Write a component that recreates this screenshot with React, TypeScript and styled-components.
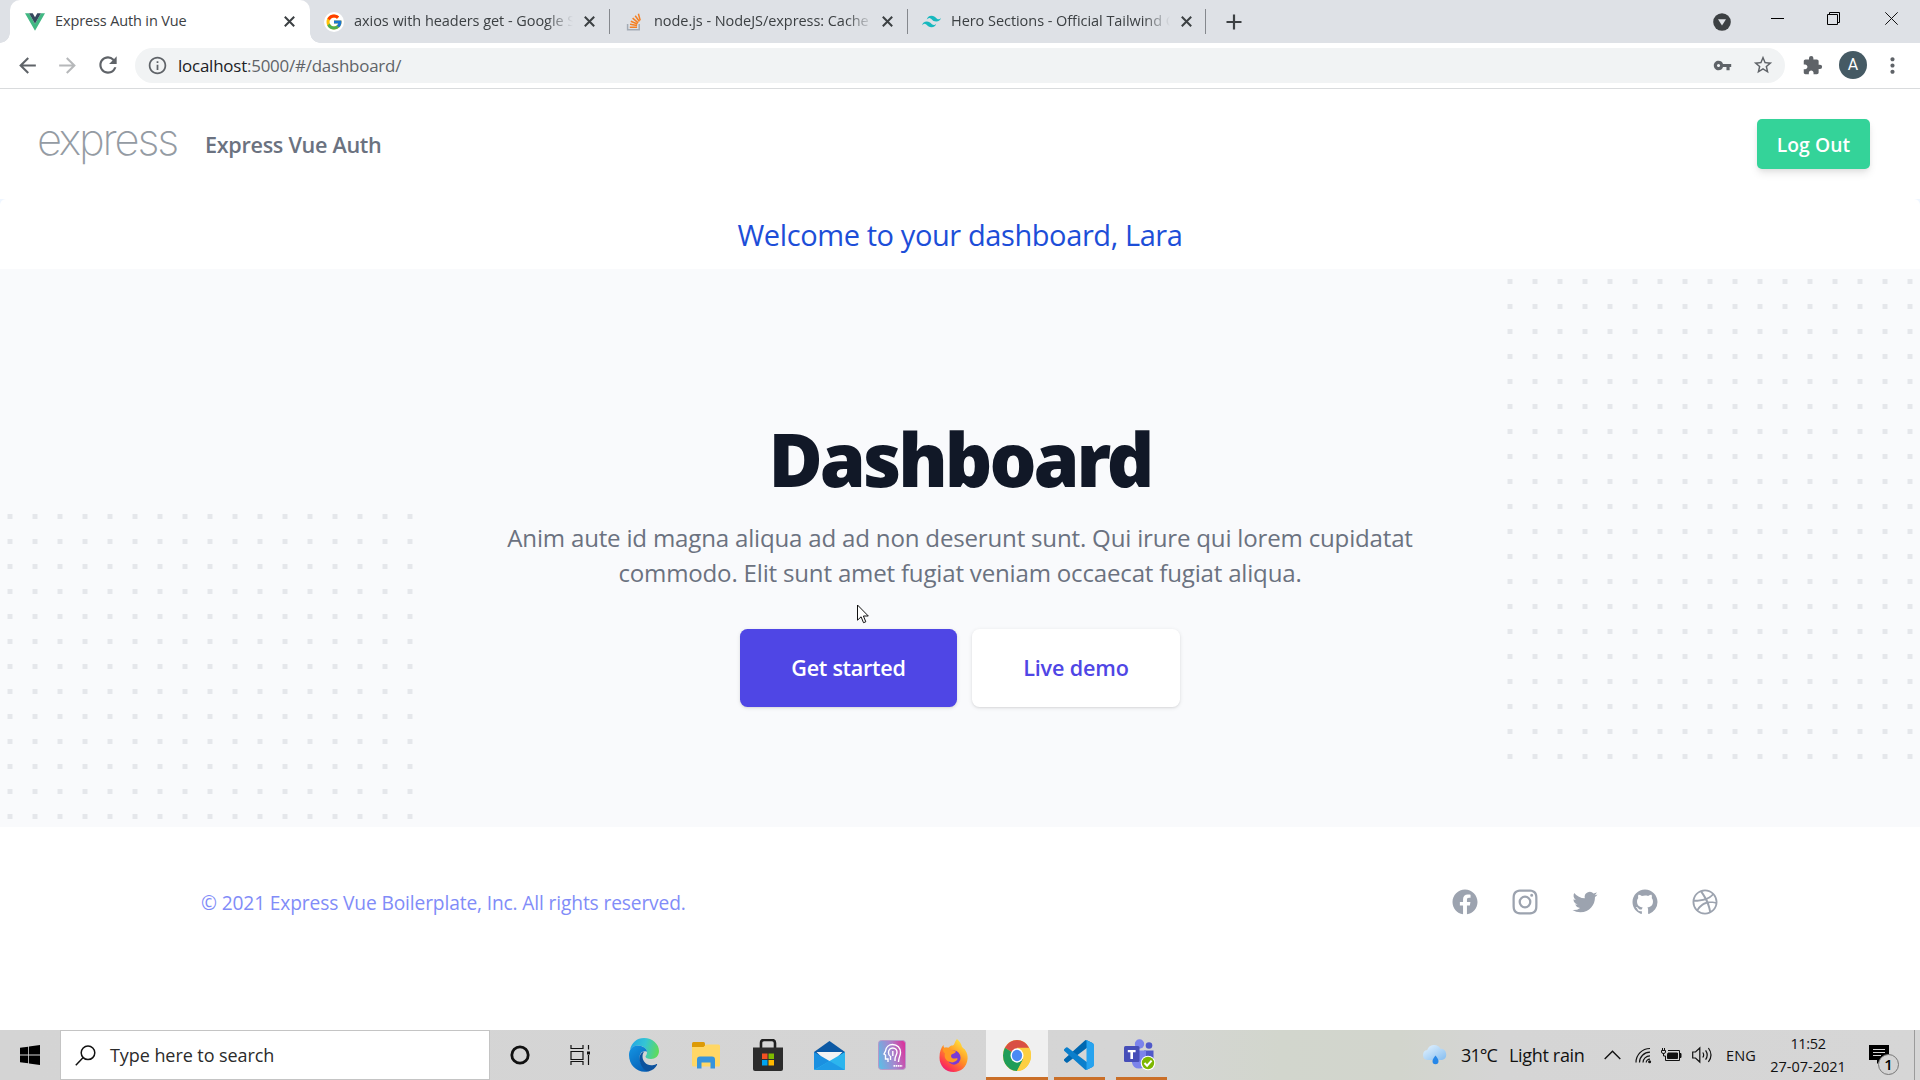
import React from "react";
import styled, { createGlobalStyle } from "styled-components";
import { FcGoogle } from "react-icons/fc";
import {
  MdArrowBack,
  MdArrowForward,
  MdExtension,
  MdInfoOutline,
  MdMoreVert,
  MdRefresh,
  MdStarBorder,
  MdVpnKey,
} from "react-icons/md";

const GlobalStyle = createGlobalStyle`
  * { box-sizing: border-box; }
  body {
    margin: 0;
    background: #fff;
    font-family: "Open Sans", "Noto Sans", sans-serif;
    overflow: hidden;
  }
  svg { display: block; flex: none; }
  h1, p { margin: 0; }
`;

const Screen = styled.div`
  width: 1920px;
  height: 1080px;
  display: flex;
  flex-direction: column;
  overflow: hidden;
`;

/* ---------- Browser chrome ---------- */

const TabStrip = styled.div`
  height: 43px;
  flex: none;
  display: flex;
  align-items: stretch;
  padding-left: 10px;
  background: #dee1e6;
`;

const Tab = styled.div<{ $active?: boolean; $width: number; $pad?: number }>`
  position: relative;
  width: ${(p) => p.$width}px;
  display: flex;
  align-items: center;
  padding: 0 ${(p) => p.$pad ?? 15}px;
  background: ${(p) => (p.$active ? "#fff" : "transparent")};
  border-radius: 10px 10px 0 0;

  &::before,
  &::after {
    content: "";
    display: ${(p) => (p.$active ? "block" : "none")};
    position: absolute;
    bottom: 0;
    width: 10px;
    height: 10px;
  }
  &::before {
    left: -10px;
    background: radial-gradient(circle at 0 0, transparent 9.5px, #fff 10px);
  }
  &::after {
    right: -10px;
    background: radial-gradient(circle at 100% 0, transparent 9.5px, #fff 10px);
  }
`;

const Favicon = styled.span`
  width: 20px;
  height: 20px;
  margin-right: 10px;
  display: flex;
  align-items: center;
  justify-content: center;
  flex: none;
`;

const GoogleDisc = styled(Favicon)`
  background: #fff;
  border-radius: 50%;
`;

const TabTitle = styled.span<{ $fade?: boolean; $track?: number }>`
  flex: 1;
  white-space: nowrap;
  padding-bottom: 2px;
  font-size: 14.5px;
  letter-spacing: ${(p) => p.$track ?? -0.05}px;
  color: #3c4043;
  ${(p) => p.$fade && "mask-image: linear-gradient(90deg, #000 192px, transparent 219px);"}
`;

const Divider = styled.span`
  width: 1px;
  height: 25px;
  margin-top: 9px;
  background: #85888d;
`;

const NewTab = styled.span`
  margin-left: 20px;
  display: flex;
  align-items: center;
`;

const WindowControls = styled.div`
  margin-left: auto;
  display: flex;
  align-items: flex-start;
  padding: 12px 22px 0 0;
`;

const ControlSlot = styled.span<{ $gap: number; $drop?: number }>`
  margin-left: ${(p) => p.$gap}px;
  margin-top: ${(p) => p.$drop ?? 0}px;
`;

const Toolbar = styled.div`
  height: 46px;
  flex: none;
  display: flex;
  align-items: center;
  padding: 0 0 1px 15px;
  background: #fff;
  border-bottom: 1px solid #d9dbdd;
  color: #5f6368;
`;

const NavIcon = styled.span<{ $dim?: boolean }>`
  width: 40px;
  flex: none;
  display: flex;
  opacity: ${(p) => (p.$dim ? 0.45 : 1)};
`;

const AddressBar = styled.div`
  height: 35px;
  width: 1650px;
  flex: none;
  display: flex;
  align-items: center;
  padding: 0 11px 0 12px;
  border-radius: 18px;
  background: #f1f3f4;
`;

const Url = styled.span`
  flex: 1;
  padding-left: 10px;
  font-size: 16.9px;
  letter-spacing: -0.2px;
  color: #5f6368;
`;

const UrlHost = styled.span`
  color: #202124;
`;

const AddressActions = styled.span`
  display: flex;
  align-items: center;
  gap: 20px;
`;

const ToolbarActions = styled.div`
  display: flex;
  align-items: center;
  padding-left: 17px;
`;

const Avatar = styled.span`
  width: 28px;
  height: 28px;
  margin: 0 13px 0 16px;
  border-radius: 50%;
  background: #455a64;
  color: #fff;
  font: 400 16px/28px Roboto, sans-serif;
  text-align: center;
`;

/* ---------- Page ---------- */

const Page = styled.main`
  height: 941px;
  flex: none;
  background: #eff6ff;
  display: flex;
  flex-direction: column;
`;

const NavBar = styled.header`
  height: 110px;
  flex: none;
  display: flex;
  align-items: center;
  padding: 0 50px 0 37px;
  background: #fff;
`;

const Logo = styled.span`
  width: 168px;
  font-family: Inter, Roboto, sans-serif;
  font-weight: 200;
  font-size: 43.5px;
  line-height: 50px;
  letter-spacing: -2.2px;
  color: #949ba3;
  margin-top: -10px;
`;

const Brand = styled.span`
  font-size: 21.6px;
  font-weight: 600;
  letter-spacing: -0.3px;
  color: #6b7280;
`;

const LogOut = styled.button`
  width: 113px;
  height: 50px;
  margin-left: auto;
  padding: 0;
  border: 0;
  border-radius: 5px;
  background: #34d399;
  color: #fff;
  font: 600 19.3px "Open Sans", sans-serif;
  letter-spacing: 0.1px;
  box-shadow: 0 5px 8px -1px rgba(0, 0, 0, 0.1), 0 2px 5px -1px rgba(0, 0, 0, 0.06);
`;

const Welcome = styled.div`
  height: 70px;
  flex: none;
  border-radius: 6px 6px 0 0;
  background: #fff;
  text-align: center;
  font-size: 29px;
  line-height: 72px;
  letter-spacing: -0.4px;
  color: #1d4ed8;
`;

const Hero = styled.section`
  position: relative;
  height: 558px;
  flex: none;
  display: flex;
  flex-direction: column;
  align-items: center;
  padding-top: 152px;
  background: #f9fafc;
  overflow: hidden;
`;

const Dots = styled.svg<{ $x: number; $y: number }>`
  position: absolute;
  left: ${(p) => p.$x}px;
  top: ${(p) => p.$y}px;
`;

const Heading = styled.h1`
  font-family: "Noto Sans", "Open Sans", sans-serif;
  font-size: 74px;
  line-height: 75px;
  font-weight: 900;
  letter-spacing: -3px;
  color: #111827;
`;

const Lead = styled.p`
  width: 960px;
  margin-top: 24px;
  text-align: center;
  font-size: 24.1px;
  line-height: 35px;
  letter-spacing: -0.2px;
  color: #6b7280;
`;

const Actions = styled.div`
  display: flex;
  gap: 15px;
  margin-top: 39px;
`;

const Action = styled.button<{ $primary?: boolean }>`
  width: ${(p) => (p.$primary ? 217 : 208)}px;
  height: 78px;
  padding: 0 0 2px;
  border: 0;
  border-radius: 7.5px;
  background: ${(p) => (p.$primary ? "#4f46e5" : "#fff")};
  color: ${(p) => (p.$primary ? "#fff" : "#4f46e5")};
  font: 600 21.6px "Open Sans", sans-serif;
  letter-spacing: ${(p) => (p.$primary ? -0.3 : -0.15)}px;
  box-shadow: 0 1px 4px rgba(0, 0, 0, 0.1), 0 1px 2px rgba(0, 0, 0, 0.06);
`;

const Pointer = styled.svg`
  position: absolute;
  left: 857px;
  top: 335px;
`;

const Footer = styled.footer`
  flex: 1;
  display: flex;
  justify-content: space-between;
  align-items: flex-start;
  padding: 60px 200px 0;
  background: #fff;
`;

const Copyright = styled.span`
  padding-left: 1px;
  font-size: 19.2px;
  line-height: 32px;
  letter-spacing: -0.14px;
  color: #818cf8;
`;

const Social = styled.nav`
  display: flex;
  gap: 30px;
  color: #9ca3af;
`;

/* ---------- Taskbar ---------- */

const Taskbar = styled.footer`
  height: 50px;
  flex: none;
  display: flex;
  align-items: stretch;
  background: linear-gradient(90deg, #d4d4d4 0, #d5d5d5 1120px, #d2d6cd 1280px, #d2d5cd 1400px, #d5d5d5 1500px, #d6d6d6);
  color: #111;
`;

const StartButton = styled.span`
  width: 60px;
  display: flex;
  align-items: center;
  justify-content: center;
`;

const SearchBox = styled.div`
  width: 430px;
  display: flex;
  align-items: center;
  padding-left: 14px;
  background: #fff;
  border: 1px solid #c4c4c4;
`;

const SearchText = styled.span`
  margin-left: 14px;
  font-size: 18px;
  letter-spacing: -0.07px;
  color: #2b2b2b;
`;

const TaskItem = styled.span<{ $state?: "focused" | "open" }>`
  width: 62px;
  display: flex;
  align-items: center;
  justify-content: center;
  padding-right: ${(p) => (p.$state ? 1 : 3)}px;
  ${(p) =>
    p.$state === "focused" && "background: linear-gradient(#f0f0f0 47px, #ca6f28 47px);"}
  ${(p) =>
    p.$state === "open" &&
    "background: linear-gradient(#ca6f28, #ca6f28) center bottom / 51px 3px no-repeat;"}
`;

const Tray = styled.div`
  margin-left: auto;
  display: flex;
  align-items: center;
`;

const TrayText = styled.span<{ $w: number; $size?: number; $track?: number }>`
  width: ${(p) => p.$w}px;
  font-size: ${(p) => p.$size ?? 18}px;
  letter-spacing: ${(p) => p.$track ?? 0}px;
  white-space: nowrap;
`;

const TraySlot = styled.span<{ $w: number }>`
  width: ${(p) => p.$w}px;
  display: flex;
`;

const Clock = styled.span`
  width: 96px;
  display: flex;
  flex-direction: column;
  padding-right: 2px;
  text-align: center;
  font-size: 14.5px;
  line-height: 23px;
`;

const ClockTime = styled.span`
  letter-spacing: -0.35px;
`;

const Notifications = styled.span`
  position: relative;
  width: 57px;
  height: 50px;
  padding: 15px 0 0 12px;
`;

const Badge = styled.span`
  position: absolute;
  left: 21px;
  top: 24px;
  width: 21px;
  height: 21px;
  border: 1px solid #777;
  border-radius: 50%;
  background: #d3d3d3;
  color: #000;
  font-size: 15px;
  font-weight: 600;
  line-height: 19px;
  text-align: center;
`;

const ShowDesktop = styled.span`
  width: 6px;
  align-self: stretch;
  border-left: 1px solid #9b9b9b;
`;

/* ---------- Drawings ---------- */

const CloseMark = () => (
  <svg width="11" height="11" viewBox="0 0 11 11" stroke="#3c4043" strokeWidth="2">
    <path d="M.8.8l9.4 9.4M10.2.8L.8 10.2" />
  </svg>
);

const VueLogo = () => (
  <svg width="20" height="18" viewBox="0 0 20 17.3">
    <path d="M0 0h4l6 10.4L16 0h4L10 17.3z" fill="#41b883" />
    <path d="M4 0h3.7L10 4l2.3-4H16l-6 10.4z" fill="#34495e" />
  </svg>
);

const StackLogo = () => (
  <svg width="16" height="18" viewBox="0 0 16 18" fill="none">
    <path d="M1.6 11v5.8h11.6V11" stroke="#a3abb5" strokeWidth="1.5" />
    <path
      d="M3.8 14.3h7.3M4 11.3l7.1 1.3M4.8 8.2l6.6 2.8M6.6 5.2l5.6 4.6M9.2 2.7l4.2 5.8M12.4.8l1.8 6.6"
      stroke="#f48024"
      strokeWidth="1.5"
    />
  </svg>
);

const TailwindLogo = () => (
  <svg width="19" height="19" viewBox="0 0 24 24" fill="#17b8be">
    <path d="M12 4.8c-3.2 0-5.2 1.6-6 4.8 1.2-1.6 2.6-2.2 4.2-1.8.913.228 1.565.89 2.288 1.624C13.666 10.618 15.027 12 18 12c3.2 0 5.2-1.6 6-4.8-1.2 1.6-2.6 2.2-4.2 1.8-.913-.228-1.565-.89-2.288-1.624C16.337 6.182 14.976 4.8 12 4.8zM6 12c-3.2 0-5.2 1.6-6 4.8 1.2-1.6 2.6-2.2 4.2-1.8.913.228 1.565.89 2.288 1.624C7.666 17.818 9.027 19.2 12 19.2c3.2 0 5.2-1.6 6-4.8-1.2 1.6-2.6 2.2-4.2 1.8-.913-.228-1.565-.89-2.288-1.624C10.337 13.382 8.976 12 6 12z" />
  </svg>
);

const DotGrid = ({ id, x, y, rows }: { id: string; x: number; y: number; rows: number }) => (
  <Dots $x={x} $y={y} width={425} height={rows * 25}>
    <defs>
      <pattern id={id} width="25" height="25" patternUnits="userSpaceOnUse">
        <rect x="0.5" width="5" height="5" fill="#e5e7eb" />
      </pattern>
    </defs>
    <rect width="425" height={rows * 25} fill={`url(#${id})`} />
  </Dots>
);

const socialPaths: string[] = [
  "M22 12c0-5.523-4.477-10-10-10S2 6.477 2 12c0 4.991 3.657 9.128 8.438 9.878v-6.987h-2.54V12h2.54V9.797c0-2.506 1.492-3.89 3.777-3.89 1.094 0 2.238.195 2.238.195v2.46h-1.26c-1.243 0-1.63.771-1.63 1.562V12h2.773l-.443 2.89h-2.33v6.988C18.343 21.128 22 16.991 22 12z",
  "M12.315 2c2.43 0 2.784.013 3.808.06 1.064.049 1.791.218 2.427.465a4.902 4.902 0 011.772 1.153 4.902 4.902 0 011.153 1.772c.247.636.416 1.363.465 2.427.048 1.067.06 1.407.06 4.123v.08c0 2.643-.012 2.987-.06 4.043-.049 1.064-.218 1.791-.465 2.427a4.902 4.902 0 01-1.153 1.772 4.902 4.902 0 01-1.772 1.153c-.636.247-1.363.416-2.427.465-1.067.048-1.407.06-4.123.06h-.08c-2.643 0-2.987-.012-4.043-.06-1.064-.049-1.791-.218-2.427-.465a4.902 4.902 0 01-1.772-1.153 4.902 4.902 0 01-1.153-1.772c-.247-.636-.416-1.363-.465-2.427-.047-1.024-.06-1.379-.06-3.808v-.63c0-2.43.013-2.784.06-3.808.049-1.064.218-1.791.465-2.427a4.902 4.902 0 011.153-1.772A4.902 4.902 0 015.45 2.525c.636-.247 1.363-.416 2.427-.465C8.901 2.013 9.256 2 11.685 2h.63zm-.081 1.802h-.468c-2.456 0-2.784.011-3.807.058-.975.045-1.504.207-1.857.344-.467.182-.8.398-1.15.748-.35.35-.566.683-.748 1.15-.137.353-.3.882-.344 1.857-.047 1.023-.058 1.351-.058 3.807v.468c0 2.456.011 2.784.058 3.807.045.975.207 1.504.344 1.857.182.466.399.8.748 1.15.35.35.683.566 1.15.748.353.137.882.3 1.857.344 1.054.048 1.37.058 4.041.058h.08c2.597 0 2.917-.01 3.96-.058.976-.045 1.505-.207 1.858-.344.466-.182.8-.398 1.15-.748.35-.35.566-.683.748-1.15.137-.353.3-.882.344-1.857.048-1.055.058-1.37.058-4.041v-.08c0-2.597-.01-2.917-.058-3.96-.045-.976-.207-1.505-.344-1.858a3.097 3.097 0 00-.748-1.15 3.098 3.098 0 00-1.15-.748c-.353-.137-.882-.3-1.857-.344-1.023-.047-1.351-.058-3.807-.058zM12 6.865a5.135 5.135 0 110 10.27 5.135 5.135 0 010-10.27zm0 1.802a3.333 3.333 0 100 6.666 3.333 3.333 0 000-6.666zm5.338-3.205a1.2 1.2 0 110 2.4 1.2 1.2 0 010-2.4z",
  "M8.29 20.251c7.547 0 11.675-6.253 11.675-11.675 0-.178 0-.355-.012-.53A8.348 8.348 0 0022 5.92a8.19 8.19 0 01-2.357.646 4.118 4.118 0 001.804-2.27 8.224 8.224 0 01-2.605.996 4.107 4.107 0 00-6.993 3.743 11.65 11.65 0 01-8.457-4.287 4.106 4.106 0 001.27 5.477A4.072 4.072 0 012.8 9.713v.052a4.105 4.105 0 003.292 4.022 4.095 4.095 0 01-1.853.07 4.108 4.108 0 003.834 2.85A8.233 8.233 0 012 18.407a11.616 11.616 0 006.29 1.84",
  "M12 2C6.477 2 2 6.484 2 12.017c0 4.425 2.865 8.18 6.839 9.504.5.092.682-.217.682-.483 0-.237-.008-.868-.013-1.703-2.782.605-3.369-1.343-3.369-1.343-.454-1.158-1.11-1.466-1.11-1.466-.908-.62.069-.608.069-.608 1.003.07 1.531 1.032 1.531 1.032.892 1.53 2.341 1.088 2.91.832.092-.647.35-1.088.636-1.338-2.22-.253-4.555-1.113-4.555-4.951 0-1.093.39-1.988 1.029-2.688-.103-.253-.446-1.272.098-2.65 0 0 .84-.27 2.75 1.026A9.564 9.564 0 0112 6.844c.85.004 1.705.115 2.504.337 1.909-1.296 2.747-1.027 2.747-1.027.546 1.379.202 2.398.1 2.651.64.7 1.028 1.595 1.028 2.688 0 3.848-2.339 4.695-4.566 4.943.359.309.678.92.678 1.855 0 1.338-.012 2.419-.012 2.747 0 .268.18.58.688.482A10.019 10.019 0 0022 12.017C22 6.484 17.522 2 12 2z",
  "M12 2C6.48 2 2 6.48 2 12s4.48 10 10 10c5.51 0 10-4.48 10-10S17.51 2 12 2zm6.605 4.61a8.502 8.502 0 011.93 5.314c-.281-.054-3.101-.629-5.943-.271-.065-.141-.12-.293-.184-.445a25.416 25.416 0 00-.564-1.236c3.145-1.28 4.577-3.124 4.761-3.362zM12 3.475c2.17 0 4.154.813 5.662 2.148-.152.216-1.443 1.941-4.48 3.08-1.399-2.57-2.95-4.675-3.189-5A8.687 8.687 0 0112 3.475zm-3.633.803a53.896 53.896 0 013.167 4.935c-3.992 1.063-7.517 1.04-7.896 1.04a8.581 8.581 0 014.729-5.975zM3.453 12.01v-.26c.37.01 4.512.065 8.775-1.215.25.477.477.965.694 1.453-.109.033-.228.065-.336.098-4.404 1.42-6.747 5.303-6.942 5.629a8.522 8.522 0 01-2.19-5.705zM12 20.547a8.482 8.482 0 01-5.239-1.8c.152-.315 1.888-3.656 6.703-5.337.022-.01.033-.01.054-.022a35.318 35.318 0 011.823 6.475 8.4 8.4 0 01-3.341.684zm4.761-1.465c-.086-.52-.542-3.015-1.659-6.084 2.679-.423 5.022.271 5.314.369a8.468 8.468 0 01-3.655 5.715z",
];

const EdgeLogo = () => (
  <svg width="30" height="34" viewBox="0 0 30 34">
    <defs>
      <linearGradient id="edgeTop" x1="0" y1="0.3" x2="1" y2="0.5">
        <stop offset="0" stopColor="#22a7e5" />
        <stop offset=".5" stopColor="#35c5d4" />
        <stop offset="1" stopColor="#5fdb5a" />
      </linearGradient>
      <linearGradient id="edgeLeft" x1="0" y1="0" x2="0.6" y2="1">
        <stop offset="0" stopColor="#1596e4" />
        <stop offset="1" stopColor="#0662b8" />
      </linearGradient>
    </defs>
    <path d="M1 12C2.5 4.500 8 0 15 0c8.600 0 15 6.200 15 13 0 5-3.800 8-8 8-3.600 0-5.500-1.400-5.500-2.600 0-.8 1.500-1.400 1.500-4C18 10 13 7.200 8.500 7.400 5 7.500 2.500 9.500 1 12z" fill="url(#edgeTop)" />
    <path d="M0 17c0-6 4-9.600 8.500-9.600 5 0 9.500 3 9.500 6.400-3.800-1.600-7.300.8-7.300 5.400 0 6 4 11.500 9.300 14C10 36 0 28.500 0 17z" fill="url(#edgeLeft)" />
    <path d="M15.500 13.300c-3 .8-5 3.400-5 6.700C10.500 27.500 16 34 20 33.300c3.500-.8 6.500-3.500 8-6.300.4-.9-.2-1.200-1-.8-1.300.6-3 1-4.800 1-5 0-8.700-4.200-8.700-8.700 0-2.200.8-4.200 2-5.200z" fill="#0c529e" />
  </svg>
);

const FolderLogo = () => (
  <svg width="28" height="27" viewBox="0 0 28 27">
    <path d="M0 5V1.500Q0 0 1.500 0h10Q13 0 13 1.500V5z" fill="#dd9a06" />
    <path d="M0 5h11.500l2.500-2.500h12.500Q28 2.500 28 4v19q0 1.500-1.500 1.500h-25Q0 24.500 0 23z" fill="#ffd766" />
    <path d="M5 26.500v-9Q5 14.500 8 14.500h12q3 0 3 3v9h-4.500v-6h-9v6z" fill="#3694dc" />
  </svg>
);

const StoreLogo = () => (
  <svg width="30" height="32" viewBox="0 0 30 32">
    <path d="M8 11V4q0-3 3-3h8q3 0 3 3v7" fill="none" stroke="#1f1f1f" strokeWidth="2.600" />
    <path d="M0 8.500h30V30q0 2-2 2H2q-2 0-2-2z" fill="#2c2c2c" />
    <path d="M9 14.500h5.500V20H9z" fill="#f25022" />
    <path d="M15.500 14.500H21V20h-5.500z" fill="#7fba00" />
    <path d="M9 21h5.500v5.500H9z" fill="#00a4ef" />
    <path d="M15.500 21H21v5.500h-5.500z" fill="#ffb900" />
  </svg>
);

const MailLogo = () => (
  <svg width="31" height="29" viewBox="0 0 31 29">
    <path d="M0 11L15.500 0 31 11v4H0z" fill="#0c59a4" />
    <path d="M2.500 11h26L15.500 24z" fill="#f3f3f3" />
    <path d="M0 11l31 18H1q-1 0-1-1z" fill="#1b90e0" />
    <path d="M31 11L0 29h30q1 0 1-1z" fill="#2cb5ee" />
    <path d="M15.500 20L31 29H1z" fill="#1f9be6" />
  </svg>
);

const HeadLogo = () => (
  <svg width="28" height="30" viewBox="0 0 28 30">
    <defs>
      <linearGradient id="headFill" x1="0" y1="0.6" x2="1" y2="0.3">
        <stop offset="0" stopColor="#62b9e4" />
        <stop offset=".5" stopColor="#a687cf" />
        <stop offset="1" stopColor="#d9359d" />
      </linearGradient>
    </defs>
    <rect x=".5" y=".5" width="27" height="29" rx="3" fill="url(#headFill)" stroke="#b79ac9" />
    <g fill="none" stroke="#fff" strokeWidth="1.400">
      <path d="M10 22v-3H7.500v-4L6 14l1.500-3C8 7 11 4.500 14.500 4.500c5 0 8 3.500 8 8 0 3.500-2 5-2 9.500" />
      <path d="M12.500 20v-3.500c-1.500-.8-2-2-2-4 0-2.500 1.800-4.500 4.300-4.500s4.200 2 4.200 4.300c0 2.700-2 3.700-2 6.700v2" />
      <path d="M14.800 11v5" />
    </g>
    <path d="M15.500 25.800h9" stroke="#fff" strokeWidth="1.800" strokeDasharray="1.600 .6" />
  </svg>
);

const FirefoxLogo = () => (
  <svg width="29" height="33" viewBox="0 0 29 31" preserveAspectRatio="none">
    <defs>
      <linearGradient id="foxBody" x1="0.8" y1="0.1" x2="0.2" y2="1">
        <stop offset="0" stopColor="#ffe03b" />
        <stop offset=".45" stopColor="#ff8f25" />
        <stop offset=".8" stopColor="#ff3d4d" />
        <stop offset="1" stopColor="#e9127d" />
      </linearGradient>
    </defs>
    <path d="M18 0c3 2.500 4.500 5 5 7.500 1 .6 1.700 1.200 2 2 .6-.2 1 .6 1.300 1 1.800 2.500 2.500 5 2.300 8C28 26 22 31 14.500 31 6.500 31 .5 25 .5 17.500.5 12 2 8.500 4.500 5.500c0 1.200.2 2 .8 2.700 1.200-.4 2.700-.4 4 0C11 6.500 12 6 13.500 6c2.300 0 2-4 4.500-6z" fill="url(#foxBody)" />
    <circle cx="15" cy="17.500" r="6.600" fill="#7a3ad6" />
    <path d="M4 9c3-1.500 6-1 8 1.500 2 0 4 .4 5 1.500-1.200 1.700-3 2-4.500 2.500-.7 1-.6 2.500.5 3.300 2 1.400 4.500-.3 5.500.6.4.8-1.700 3.600-5.500 3.600-5 0-8.500-4-7-8.500C4.500 12.500 3.500 11 4 9z" fill="#ff9a23" />
  </svg>
);

const ChromeLogo = () => (
  <svg width="28" height="31" viewBox="0 0 28 28" preserveAspectRatio="none">
    <circle cx="14" cy="14" r="14" fill="#fcc934" />
    <path d="M14 14L1.900 7A14 14 0 0 1 26.100 7H14z" fill="#d94f43" />
    <path d="M1.900 7A14 14 0 0 0 14 28l6-10.500L14 14z" fill="#1f9d58" />
    <path d="M14 7.500h12.400A14 14 0 0 1 14 28l6-10.500z" fill="#fccf42" />
    <circle cx="14" cy="14" r="6.500" fill="#fff" />
    <circle cx="14" cy="14" r="5.100" fill="#4a8af4" />
  </svg>
);

const CodeLogo = () => (
  <svg width="30" height="30" viewBox="0 0 100 100">
    <path d="M96.500 10.800L75.900.9a6.200 6.200 0 0 0-7.100 1.200L1.300 63.600a4.200 4.200 0 0 0 0 6.200l5.500 5a4.200 4.200 0 0 0 5.300.2L93.400 13.400c2.700-2 6.600-.1 6.600 3.300z" fill="#0067b0" />
    <path d="M96.500 89.200L75.900 99.100a6.200 6.200 0 0 1-7.100-1.200L1.300 36.400a4.200 4.200 0 0 1 0-6.200l5.500-5a4.200 4.200 0 0 1 5.300-.2l81.300 61.600c2.700 2 6.600.1 6.600-3.300z" fill="#0b7fcc" />
    <path d="M75.900 99.100a6.200 6.200 0 0 1-7.100-1.200c2.300 2.300 6.200.7 6.200-2.600V4.700c0-3.300-3.900-4.900-6.200-2.600A6.200 6.200 0 0 1 75.900.9l20.600 9.900a6.200 6.200 0 0 1 3.500 5.600v67.200a6.200 6.200 0 0 1-3.500 5.600z" fill="#27a3ef" />
  </svg>
);

const TeamsLogo = () => (
  <svg width="33" height="32" viewBox="0 0 33 32">
    <circle cx="25" cy="6.500" r="3.300" fill="#5059c9" />
    <path d="M20 11.500h9.500v10q-2 4-6 4z" fill="#5059c9" />
    <circle cx="15.500" cy="5" r="4.700" fill="#7b83eb" />
    <path d="M8 11.500h14v12q-1 6-7 6t-7-6z" fill="#7b83eb" />
    <rect y="7" width="15.500" height="16" rx="1.500" fill="#464eb8" />
    <path d="M3.800 11h7.800v2.300H9v6.800H6.400v-6.800H3.800z" fill="#fff" />
    <circle cx="24" cy="24" r="7.300" fill="#fff" />
    <circle cx="24" cy="24" r="6.200" fill="#7db700" />
    <path d="M20.500 24l2.600 2.700 4.500-5" fill="none" stroke="#fff" strokeWidth="2" />
  </svg>
);

const TaskViewIcon = () => (
  <svg width="24" height="20" viewBox="0 0 24 20" fill="none" stroke="#111" strokeWidth="1.200">
    <path d="M1 0v3.500h12V0M1 20v-3.500h12V20M1 6.500h12v8H1zM18.500 0v4.500M18.500 10v10" />
    <path d="M17 6.500h3v3h-3z" fill="#111" stroke="none" />
  </svg>
);

const CloudIcon = () => (
  <svg width="26" height="20" viewBox="0 0 26 20">
    <defs>
      <linearGradient id="cloud" x1="0" y1="0" x2="1" y2="1">
        <stop offset="0" stopColor="#e8f5ff" />
        <stop offset="1" stopColor="#84bdf0" />
      </linearGradient>
    </defs>
    <path d="M5.500 15a5 5 0 0 1-.3-9.900A7.300 7.300 0 0 1 18.500 3.800 5.700 5.700 0 0 1 20 15z" fill="url(#cloud)" />
    <path d="M13.500 10.500c2 2.700 3 4.200 3 5.800a3 3 0 0 1-6 0c0-1.600 1-3.100 3-5.800z" fill="#2687e8" />
  </svg>
);

const tasks: { icon: React.ReactNode; state?: "focused" | "open" }[] = [
  {
    icon: (
      <svg width="20" height="20" viewBox="0 0 20 20">
        <circle cx="10" cy="10" r="8.200" fill="none" stroke="#111" strokeWidth="2.800" />
      </svg>
    ),
  },
  { icon: <TaskViewIcon /> },
  { icon: <EdgeLogo /> },
  { icon: <FolderLogo /> },
  { icon: <StoreLogo /> },
  { icon: <MailLogo /> },
  { icon: <HeadLogo /> },
  { icon: <FirefoxLogo /> },
  { icon: <ChromeLogo />, state: "focused" },
  { icon: <CodeLogo />, state: "open" },
  { icon: <TeamsLogo />, state: "open" },
];

export default function App() {
  return (
    <Screen>
      <GlobalStyle />
      <TabStrip>
        <Tab $active $width={300}>
          <Favicon><VueLogo /></Favicon>
          <TabTitle $track={-0.13}>Express Auth in Vue</TabTitle>
          <CloseMark />
        </Tab>
        <Tab $width={299} $pad={14}>
          <GoogleDisc><FcGoogle size={18} /></GoogleDisc>
          <TabTitle $fade>axios with headers get - Google S</TabTitle>
          <CloseMark />
        </Tab>
        <Divider />
        <Tab $width={297} $pad={14}>
          <Favicon><StackLogo /></Favicon>
          <TabTitle $fade>node.js - NodeJS/express: Cache</TabTitle>
          <CloseMark />
        </Tab>
        <Divider />
        <Tab $width={297} $pad={13}>
          <Favicon><TailwindLogo /></Favicon>
          <TabTitle $fade>Hero Sections - Official Tailwind C</TabTitle>
          <CloseMark />
        </Tab>
        <Divider />
        <NewTab>
          <svg width="16" height="16" viewBox="0 0 16 16" stroke="#3c4043" strokeWidth="2.200">
            <path d="M8 .5v15M.5 8h15" />
          </svg>
        </NewTab>
        <WindowControls>
          <ControlSlot $gap={0} $drop={1}>
            <svg width="18" height="18" viewBox="0 0 18 18">
              <circle cx="9" cy="9" r="8.800" fill="#3c4043" />
              <path d="M5 6.300h8L9 12.500z" fill="#dee1e6" />
            </svg>
          </ControlSlot>
          <ControlSlot $gap={40}>
            <svg width="13" height="13" viewBox="0 0 13 13" stroke="#000">
              <path d="M0 6.500h13" />
            </svg>
          </ControlSlot>
          <ControlSlot $gap={43}>
            <svg width="13" height="13" viewBox="0 0 13 13" fill="none" stroke="#000">
              <path d="M.5 2.500h10v10H.5zM2.500 2.500v-2h10v10h-2" />
            </svg>
          </ControlSlot>
          <ControlSlot $gap={45}>
            <svg width="13" height="13" viewBox="0 0 13 13" stroke="#111">
              <path d="M.3.3l12.400 12.400M12.700.3L.3 12.700" />
            </svg>
          </ControlSlot>
        </WindowControls>
      </TabStrip>

      <Toolbar>
        <NavIcon><MdArrowBack size={25} /></NavIcon>
        <NavIcon $dim><MdArrowForward size={25} /></NavIcon>
        <NavIcon><MdRefresh size={26} /></NavIcon>
        <AddressBar>
          <MdInfoOutline size={21} />
          <Url><UrlHost>localhost</UrlHost>:5000/#/dashboard/</Url>
          <AddressActions>
            <MdVpnKey size={19} />
            <MdStarBorder size={22} />
          </AddressActions>
        </AddressBar>
        <ToolbarActions>
          <MdExtension size={21} />
          <Avatar>A</Avatar>
          <MdMoreVert size={25} />
        </ToolbarActions>
      </Toolbar>

      <Page>
        <NavBar>
          <Logo>express</Logo>
          <Brand>Express Vue Auth</Brand>
          <LogOut>Log Out</LogOut>
        </NavBar>
        <Welcome>Welcome to your dashboard, Lara</Welcome>
        <Hero>
          <DotGrid id="dotsLeft" x={7} y={245} rows={13} />
          <DotGrid id="dotsRight" x={1507} y={10} rows={20} />
          <Heading>Dashboard</Heading>
          <Lead>
            Anim aute id magna aliqua ad ad non deserunt sunt. Qui irure qui lorem cupidatat
            <br />
            commodo. Elit sunt amet fugiat veniam occaecat fugiat aliqua.
          </Lead>
          <Actions>
            <Action $primary>Get started</Action>
            <Action>Live demo</Action>
          </Actions>
          <Pointer width="12" height="20" viewBox="0 0 12 20">
            <path d="M.5 1v15.200l3.600-3.400 2.400 5.900 2.300-.9-2.400-5.800h4.900z" fill="#fff" stroke="#111" />
          </Pointer>
        </Hero>
        <Footer>
          <Copyright>© 2021 Express Vue Boilerplate, Inc. All rights reserved.</Copyright>
          <Social>
            {socialPaths.map((d) => (
              <svg key={d} width="30" height="30" viewBox="0 0 24 24" fill="currentColor">
                <path fillRule="evenodd" clipRule="evenodd" d={d} />
              </svg>
            ))}
          </Social>
        </Footer>
      </Page>

      <Taskbar>
        <StartButton>
          <svg width="20" height="20" viewBox="0 0 20 20" fill="#000">
            <path d="M0 2.800l8.200-1.100v7.900H0zM9 1.600L20 0v9.600H9zM0 10.400h8.200v7.900L0 17.200zM9 10.400h11V20L9 18.400z" />
          </svg>
        </StartButton>
        <SearchBox>
          <svg width="21" height="21" viewBox="0 0 21 21" fill="none" stroke="#111" strokeWidth="1.500">
            <circle cx="13" cy="7.800" r="6.800" />
            <path d="M8.200 12.600L.8 20.200" />
          </svg>
          <SearchText>Type here to search</SearchText>
        </SearchBox>
        {tasks.map((t, i) => (
          <TaskItem key={i} $state={t.state}>{t.icon}</TaskItem>
        ))}
        <Tray>
          <TraySlot $w={39}><CloudIcon /></TraySlot>
          <TrayText $w={48} $track={-0.9}>31°C</TrayText>
          <TrayText $w={95} $track={-0.33}>Light rain</TrayText>
          <TraySlot $w={31}>
            <svg width="17" height="10" viewBox="0 0 17 10" fill="none" stroke="#111" strokeWidth="1.400">
              <path d="M.7 9l7.800-7.800L16.300 9" />
            </svg>
          </TraySlot>
          <TraySlot $w={26}>
            <svg width="17" height="17" viewBox="0 0 17 17" fill="none" stroke="#111" strokeWidth="1.200">
              <path d="M1 15.500C1 8 7 1.500 15 1.500M4.500 15.500C4.500 10 9 5.200 15 5.200M8 15.500c0-3.500 3-6.700 7-6.700M11.200 15.500c0-1.800 1.600-3.300 3.800-3.300" />
              <circle cx="14.600" cy="14.800" r="1.500" fill="#111" stroke="none" />
            </svg>
          </TraySlot>
          <TraySlot $w={31}>
            <svg width="21" height="14" viewBox="0 0 21 14" fill="none" stroke="#111">
              <path d="M7 2.500h11.500v10h-14V8" />
              <path d="M7 5h9.500v5.500H6.500V7z" fill="#111" />
              <path d="M18.500 5.500H20v4h-1.500z" fill="#111" />
              <path d="M1.500 0v2M3.500 0v2M2.500 5v3h2" />
              <path d="M.5 2.500h4V4q0 1.500-2 1.500T.5 4z" />
            </svg>
          </TraySlot>
          <TraySlot $w={34}>
            <svg width="21" height="18" viewBox="0 0 21 18" fill="none" stroke="#111" strokeWidth="1.200">
              <path d="M.7 6h2.800l4.300-4v14l-4.300-4H.7z" />
              <path d="M10.800 6.500q1.700 2.500 0 5M13.600 4.300q3.200 4.700 0 9.400M16.400 2q5.200 7 0 14" />
            </svg>
          </TraySlot>
          <TrayText $w={35} $size={14.5} $track={0.1}>ENG</TrayText>
          <Clock>
            <ClockTime>11:52</ClockTime>
            <span>27-07-2021</span>
          </Clock>
          <Notifications>
            <svg width="20" height="19" viewBox="0 0 20 19">
              <path d="M0 0h20v15H12l-4 4v-4H0z" fill="#000" />
              <path d="M4 4.500h12M4 7.500h12M4 10.500h8" stroke="#d6d6d6" />
            </svg>
            <Badge>1</Badge>
          </Notifications>
          <ShowDesktop />
        </Tray>
      </Taskbar>
    </Screen>
  );
}
